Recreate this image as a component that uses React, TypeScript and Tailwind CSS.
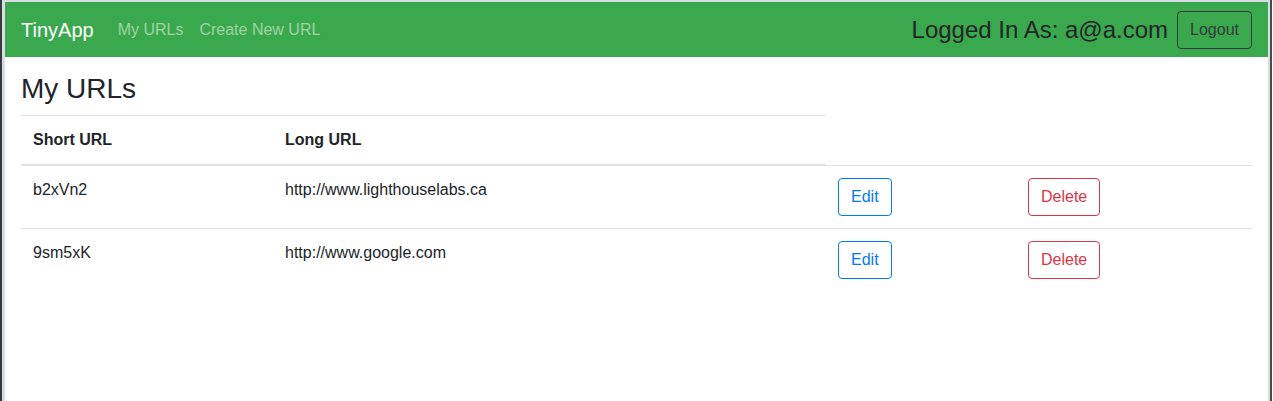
import React from "react";

interface UrlEntry {
  shortUrl: string;
  longUrl: string;
}

const urls: UrlEntry[] = [
  { shortUrl: "b2xVn2", longUrl: "http://www.lighthouselabs.ca" },
  { shortUrl: "9sm5xK", longUrl: "http://www.google.com" },
];

export default function App() {
  return (
    <div
      className="flex h-[401px] w-full bg-white text-[#212529]"
      style={{ fontFamily: '"Liberation Sans", Arial, sans-serif' }}
    >
      {/* window frame, left edge */}
      <div className="w-[2px] bg-[#3a3a3a]" />

      <div className="flex flex-1 flex-col border-t-2 border-l-[3px] border-r-2 border-[#d8dde4] bg-white">
        {/* Navbar */}
        <nav className="flex h-[55px] items-center justify-between bg-[#3aa84c] px-4">
          <div className="flex items-center">
            <a className="mr-4 py-[5px] text-[20px] leading-[30px] text-white" href="#">
              TinyApp
            </a>
            <a className="px-2 py-2 text-base leading-6 text-white/50" href="#">
              My URLs
            </a>
            <a className="px-2 py-2 text-base leading-6 text-white/50" href="#">
              Create New URL
            </a>
          </div>
          <div className="flex items-center">
            <span className="text-[24px] leading-[29px] text-[#212529]">Logged In As: a@a.com</span>
            <button className="ml-[9px] h-[38px] rounded-[4px] border border-[#343a40] px-3 text-base leading-6 text-[#343a40]">
              Logout
            </button>
          </div>
        </nav>

        {/* Content */}
        <main className="px-4 pt-[15px]">
          <h3 className="mb-[9px] text-[28px] leading-[34px] font-normal">My URLs</h3>
          <table className="w-full border-collapse text-base leading-6">
            <colgroup>
              <col className="w-[252px]" />
              <col className="w-[553px]" />
              <col className="w-[190px]" />
              <col />
            </colgroup>
            <thead>
              <tr>
                <th className="border-t border-b-2 border-[#dee2e6] p-3 text-left align-bottom font-bold">
                  Short URL
                </th>
                <th className="border-t border-b-2 border-[#dee2e6] p-3 text-left align-bottom font-bold">
                  Long URL
                </th>
              </tr>
            </thead>
            <tbody>
              {urls.map((url) => (
                <tr key={url.shortUrl}>
                  <td className="border-t border-[#dee2e6] p-3 align-top">{url.shortUrl}</td>
                  <td className="border-t border-[#dee2e6] p-3 align-top">{url.longUrl}</td>
                  <td className="border-t border-[#dee2e6] p-3 align-top">
                    <button className="h-[38px] rounded-[4px] border border-[#007bff] px-3 text-base leading-6 text-[#007bff]">
                      Edit
                    </button>
                  </td>
                  <td className="border-t border-[#dee2e6] p-3 align-top">
                    <button className="h-[38px] rounded-[4px] border border-[#dc3545] px-3 text-base leading-6 text-[#dc3545]">
                      Delete
                    </button>
                  </td>
                </tr>
              ))}
            </tbody>
          </table>
        </main>
      </div>

      {/* window frame, right edge */}
      <div className="w-[2px] bg-[#4a4a4a]" />
      <div className="w-[1px] bg-white" />
    </div>
  );
}
